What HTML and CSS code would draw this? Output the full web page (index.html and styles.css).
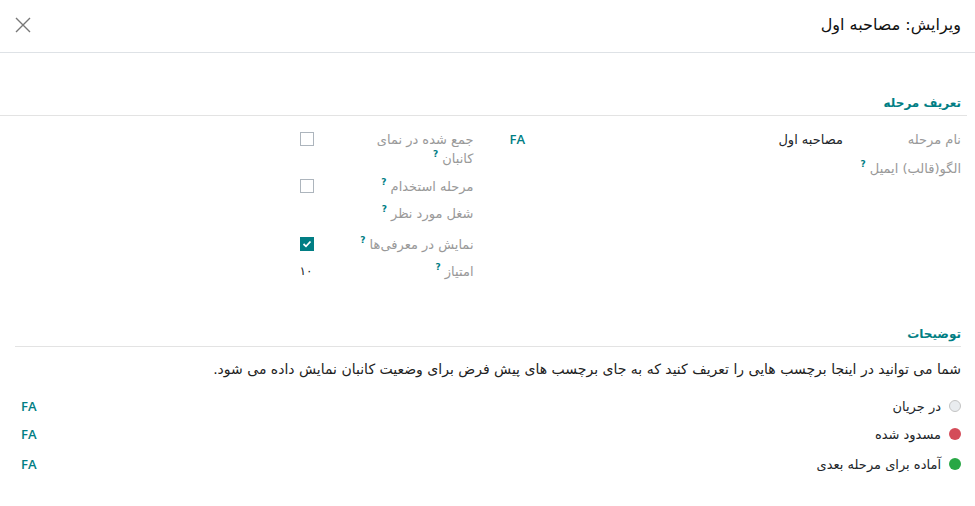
FILE: index.html
```html
<!DOCTYPE html>
<html lang="fa" dir="rtl">
<head>
<meta charset="utf-8">
<link rel="stylesheet" href="styles.css">
</head>
<body>
<div class="modal">
  <header class="modal-header">
    <h4 class="modal-title">ویرایش: مصاحبه اول</h4>
    <button class="close" aria-label="close">
      <svg width="16" height="16" viewBox="0 0 16 16"><path d="M1 1L15 15M15 1L1 15" stroke="#777" stroke-width="1.4" fill="none"/></svg>
    </button>
  </header>
  <main class="modal-body">
    <div class="separator first">تعریف مرحله</div>
    <div class="groups">
      <div class="group group-right">
        <div class="label">نام مرحله</div>
        <div class="value name-field"><span class="val-text">مصاحبه اول</span><span class="lang">FA</span></div>
        <div class="label">الگو(قالب) ایمیل <sup class="q">?</sup></div>
        <div class="value"></div>
      </div>
      <div class="group group-left">
        <div class="label r1">جمع شده در نمای کانبان <sup class="q">?</sup></div>
        <div class="value r1"><span class="cb"></span></div>
        <div class="label r2">مرحله استخدام <sup class="q">?</sup></div>
        <div class="value r2"><span class="cb"></span></div>
        <div class="label r3">شغل مورد نظر <sup class="q">?</sup></div>
        <div class="value r3"></div>
        <div class="label r4">نمایش در معرفی‌ها <sup class="q">?</sup></div>
        <div class="value r4"><span class="cb checked"><svg width="10" height="8" viewBox="0 0 10 8"><path d="M1.5 4L4 6.3L8.5 1.5" stroke="#fff" stroke-width="1.8" fill="none"/></svg></span></div>
        <div class="label r5">امتیاز <sup class="q">?</sup></div>
        <div class="value r5 num">۱۰</div>
      </div>
    </div>
    <div class="separator second">توضیحات</div>
    <p class="desc">شما می توانید در اینجا برچسب هایی را تعریف کنید که به جای برچسب های پیش فرض برای وضعیت کانبان نمایش داده می شود.</p>
    <div class="states">
      <div class="state"><span class="dot grey"></span><span class="state-name">در جریان</span><span class="lang">FA</span></div>
      <div class="state"><span class="dot red"></span><span class="state-name">مسدود شده</span><span class="lang">FA</span></div>
      <div class="state last"><span class="dot green"></span><span class="state-name">آماده برای مرحله بعدی</span><span class="lang">FA</span></div>
    </div>
  </main>
</div>
</body>
</html>
```

FILE: styles.css
```css
* { box-sizing: border-box; }
html, body { margin: 0; padding: 0; background: #fff; }
body {
  font-family: "DejaVu Sans", "Noto Sans", sans-serif;
  color: #212529;
  font-size: 13px;
}
.modal { width: 975px; }
.modal-header {
  height: 53px;
  border-bottom: 1px solid #dee2e6;
  display: flex;
  align-items: center;
  justify-content: space-between;
  padding: 0 14px 0 15px;
}
.modal-title {
  margin: 0;
  font-size: 16px;
  font-weight: normal;
  color: #111;
  padding-bottom: 3px;
}
.close {
  background: none;
  border: 0;
  padding: 0;
  width: 16px;
  height: 16px;
  margin-bottom: 3px;
  display: flex;
}
.separator {
  color: #017e84;
  font-weight: bold;
  font-size: 12px;
  border-bottom: 1px solid #e3e3e3;
  line-height: 18px;
  padding-bottom: 3px;
}
.separator.first { margin: 41px 8px 0 0; padding-right: 6px; }
.separator.second { margin: 35px 14px 0 15px; }
.groups {
  display: grid;
  grid-template-columns: 1fr 1fr;
  padding-top: 14px;
}
.group {
  padding-right: 14px;
  display: grid;
  align-items: start;
}
.group-right {
  grid-template-columns: 118px 1fr;
  grid-auto-rows: 29px;
}
.group-left {
  grid-template-columns: 160px 1fr;
}
.label {
  color: #999;
  font-size: 13px;
  line-height: 19px;
}
.group-left .label { padding-left: 32px; }
.r1 { height: 47px; }
.r2 { height: 27px; }
.r3 { height: 31px; }
.r4 { height: 27px; }
.r5 { height: 28px; }
.value { line-height: 19px; }
.name-field { display: flex; justify-content: space-between; padding-left: 22px; }
.val-text { color: #212529; font-size: 13px; }
.lang {
  color: #017e84;
  font-family: "Open Sans", "DejaVu Sans", sans-serif;
  font-weight: 600;
  font-size: 13px;
  direction: ltr;
}
.q {
  color: #017e84;
  font-size: 9px;
  line-height: 1;
  font-weight: bold;
  vertical-align: top;
  position: relative;
  top: 1px;
}
.cb {
  display: flex;
  align-items: center;
  justify-content: center;
  width: 14px;
  height: 14px;
  border: 1px solid #adb5bd;
  margin-top: 2px;
  background: #fff;
}
.cb.checked { background: #017e84; border-color: #017e84; }
.num { font-size: 12px; padding-right: 1px; }
.desc {
  margin: 11px 14px 0 0;
  font-size: 14px;
  line-height: 22px;
  color: #222;
}
.states { padding: 12px 14px 0 15px; }
.state {
  display: flex;
  align-items: center;
  height: 28px;
}
.state.last { margin-top: 2px; }
.dot {
  width: 12px;
  height: 12px;
  border-radius: 50%;
  margin-left: 8px;
  flex: none;
}
.dot.grey { background: #e9ecef; border: 1px solid #c4c4c4; }
.dot.red { background: #d44c59; }
.dot.green { background: #28a745; }
.state-name { flex: 1; font-size: 13px; color: #212529; }
.state .lang { margin-left: 6px; }
```
